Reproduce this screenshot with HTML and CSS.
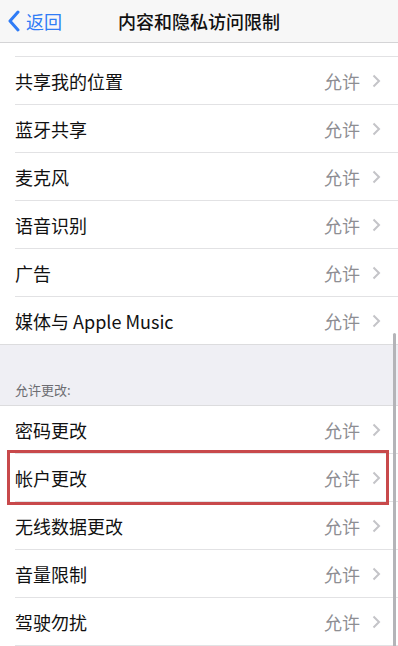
FILE: index.html
```html
<!DOCTYPE html>
<html lang="zh-CN">
<head>
    <meta charset="UTF-8">
    <meta name="viewport" content="width=device-width, initial-scale=1.0">
    <title>内容和隐私访问限制</title>
    <link rel="stylesheet" href="styles.css">
</head>
<body>
    <div class="navbar">
        <div class="back">
            <svg class="back-icon" width="14" height="22" viewBox="0 0 14 22">
                <polyline points="11,2 3,11 11,20" fill="none" stroke="#2f7cf6" stroke-width="3" stroke-linecap="round" stroke-linejoin="round"/>
            </svg>
            <span>返回</span>
        </div>
        <div class="title">内容和隐私访问限制</div>
    </div>

    <div class="group">
        <div class="row partial"><div class="inner"></div></div>
        <div class="row"><div class="inner"><span class="label">共享我的位置</span><span class="value">允许</span><svg class="chev" width="9" height="14" viewBox="0 0 9 14"><polyline points="1.5,1.5 7,7 1.5,12.5" fill="none" stroke="#c4c4c8" stroke-width="2"/></svg></div></div>
        <div class="row"><div class="inner"><span class="label">蓝牙共享</span><span class="value">允许</span><svg class="chev" width="9" height="14" viewBox="0 0 9 14"><polyline points="1.5,1.5 7,7 1.5,12.5" fill="none" stroke="#c4c4c8" stroke-width="2"/></svg></div></div>
        <div class="row"><div class="inner"><span class="label">麦克风</span><span class="value">允许</span><svg class="chev" width="9" height="14" viewBox="0 0 9 14"><polyline points="1.5,1.5 7,7 1.5,12.5" fill="none" stroke="#c4c4c8" stroke-width="2"/></svg></div></div>
        <div class="row"><div class="inner"><span class="label">语音识别</span><span class="value">允许</span><svg class="chev" width="9" height="14" viewBox="0 0 9 14"><polyline points="1.5,1.5 7,7 1.5,12.5" fill="none" stroke="#c4c4c8" stroke-width="2"/></svg></div></div>
        <div class="row"><div class="inner"><span class="label">广告</span><span class="value">允许</span><svg class="chev" width="9" height="14" viewBox="0 0 9 14"><polyline points="1.5,1.5 7,7 1.5,12.5" fill="none" stroke="#c4c4c8" stroke-width="2"/></svg></div></div>
        <div class="row last"><div class="inner"><span class="label">媒体与 Apple Music</span><span class="value">允许</span><svg class="chev" width="9" height="14" viewBox="0 0 9 14"><polyline points="1.5,1.5 7,7 1.5,12.5" fill="none" stroke="#c4c4c8" stroke-width="2"/></svg></div></div>
    </div>

    <div class="section-header">允许更改:</div>

    <div class="group top">
        <div class="row"><div class="inner"><span class="label">密码更改</span><span class="value">允许</span><svg class="chev" width="9" height="14" viewBox="0 0 9 14"><polyline points="1.5,1.5 7,7 1.5,12.5" fill="none" stroke="#c4c4c8" stroke-width="2"/></svg></div></div>
        <div class="row marked"><div class="inner"><span class="label">帐户更改</span><span class="value">允许</span><svg class="chev" width="9" height="14" viewBox="0 0 9 14"><polyline points="1.5,1.5 7,7 1.5,12.5" fill="none" stroke="#c4c4c8" stroke-width="2"/></svg></div></div>
        <div class="row"><div class="inner"><span class="label">无线数据更改</span><span class="value">允许</span><svg class="chev" width="9" height="14" viewBox="0 0 9 14"><polyline points="1.5,1.5 7,7 1.5,12.5" fill="none" stroke="#c4c4c8" stroke-width="2"/></svg></div></div>
        <div class="row"><div class="inner"><span class="label">音量限制</span><span class="value">允许</span><svg class="chev" width="9" height="14" viewBox="0 0 9 14"><polyline points="1.5,1.5 7,7 1.5,12.5" fill="none" stroke="#c4c4c8" stroke-width="2"/></svg></div></div>
        <div class="row"><div class="inner"><span class="label">驾驶勿扰</span><span class="value">允许</span><svg class="chev" width="9" height="14" viewBox="0 0 9 14"><polyline points="1.5,1.5 7,7 1.5,12.5" fill="none" stroke="#c4c4c8" stroke-width="2"/></svg></div></div>
    </div>

    <div class="scrollbar"></div>
</body>
</html>
```

FILE: styles.css
```css
* {
    margin: 0;
    padding: 0;
    box-sizing: border-box;
}
body {
    width: 398px;
    height: 646px;
    overflow: hidden;
    position: relative;
    background-color: #efeff4;
    font-family: "Noto Sans CJK SC", "Noto Sans", sans-serif;
    color: #111;
}
.navbar {
    height: 43px;
    background-color: #f7f7f7;
    border-bottom: 1px solid #d4d4d6;
    display: flex;
    align-items: center;
    position: relative;
}
.back {
    display: flex;
    align-items: center;
    padding-left: 7px;
    color: #2f7cf6;
    font-size: 18px;
}
.back-icon {
    margin-right: 5px;
}
.title {
    position: absolute;
    left: 0;
    right: 0;
    text-align: center;
    font-size: 18px;
    font-weight: 500;
    color: #111;
}
.group {
    background-color: #fff;
}
.group.top {
    border-top: 1px solid #dcdcde;
}
.row {
    height: 48px;
    padding-left: 15px;
    position: relative;
}
.row .inner {
    height: 100%;
    display: flex;
    align-items: center;
    border-bottom: 1px solid #e2e2e4;
    padding-right: 17px;
}
.row.partial {
    height: 14px;
}
.row.last {
    padding-left: 0;
}
.row.last .inner {
    padding-left: 15px;
    border-bottom-color: #dcdcde;
}
.label {
    flex: 1;
    font-size: 18px;
    color: #111;
}
.value {
    font-size: 18px;
    color: #8e8e93;
    margin-right: 12px;
}
.section-header {
    height: 60px;
    padding: 0 15px 6px;
    display: flex;
    align-items: flex-end;
    font-size: 13px;
    color: #6d6d72;
}
.row.marked::after {
    content: "";
    position: absolute;
    left: 7px;
    right: 9px;
    top: -4px;
    bottom: -3px;
    border: 3px solid #c8494b;
}
.scrollbar {
    position: absolute;
    right: 2px;
    top: 333px;
    width: 3px;
    height: 320px;
    border-radius: 2px;
    background-color: #b4b4b8;
}
```
